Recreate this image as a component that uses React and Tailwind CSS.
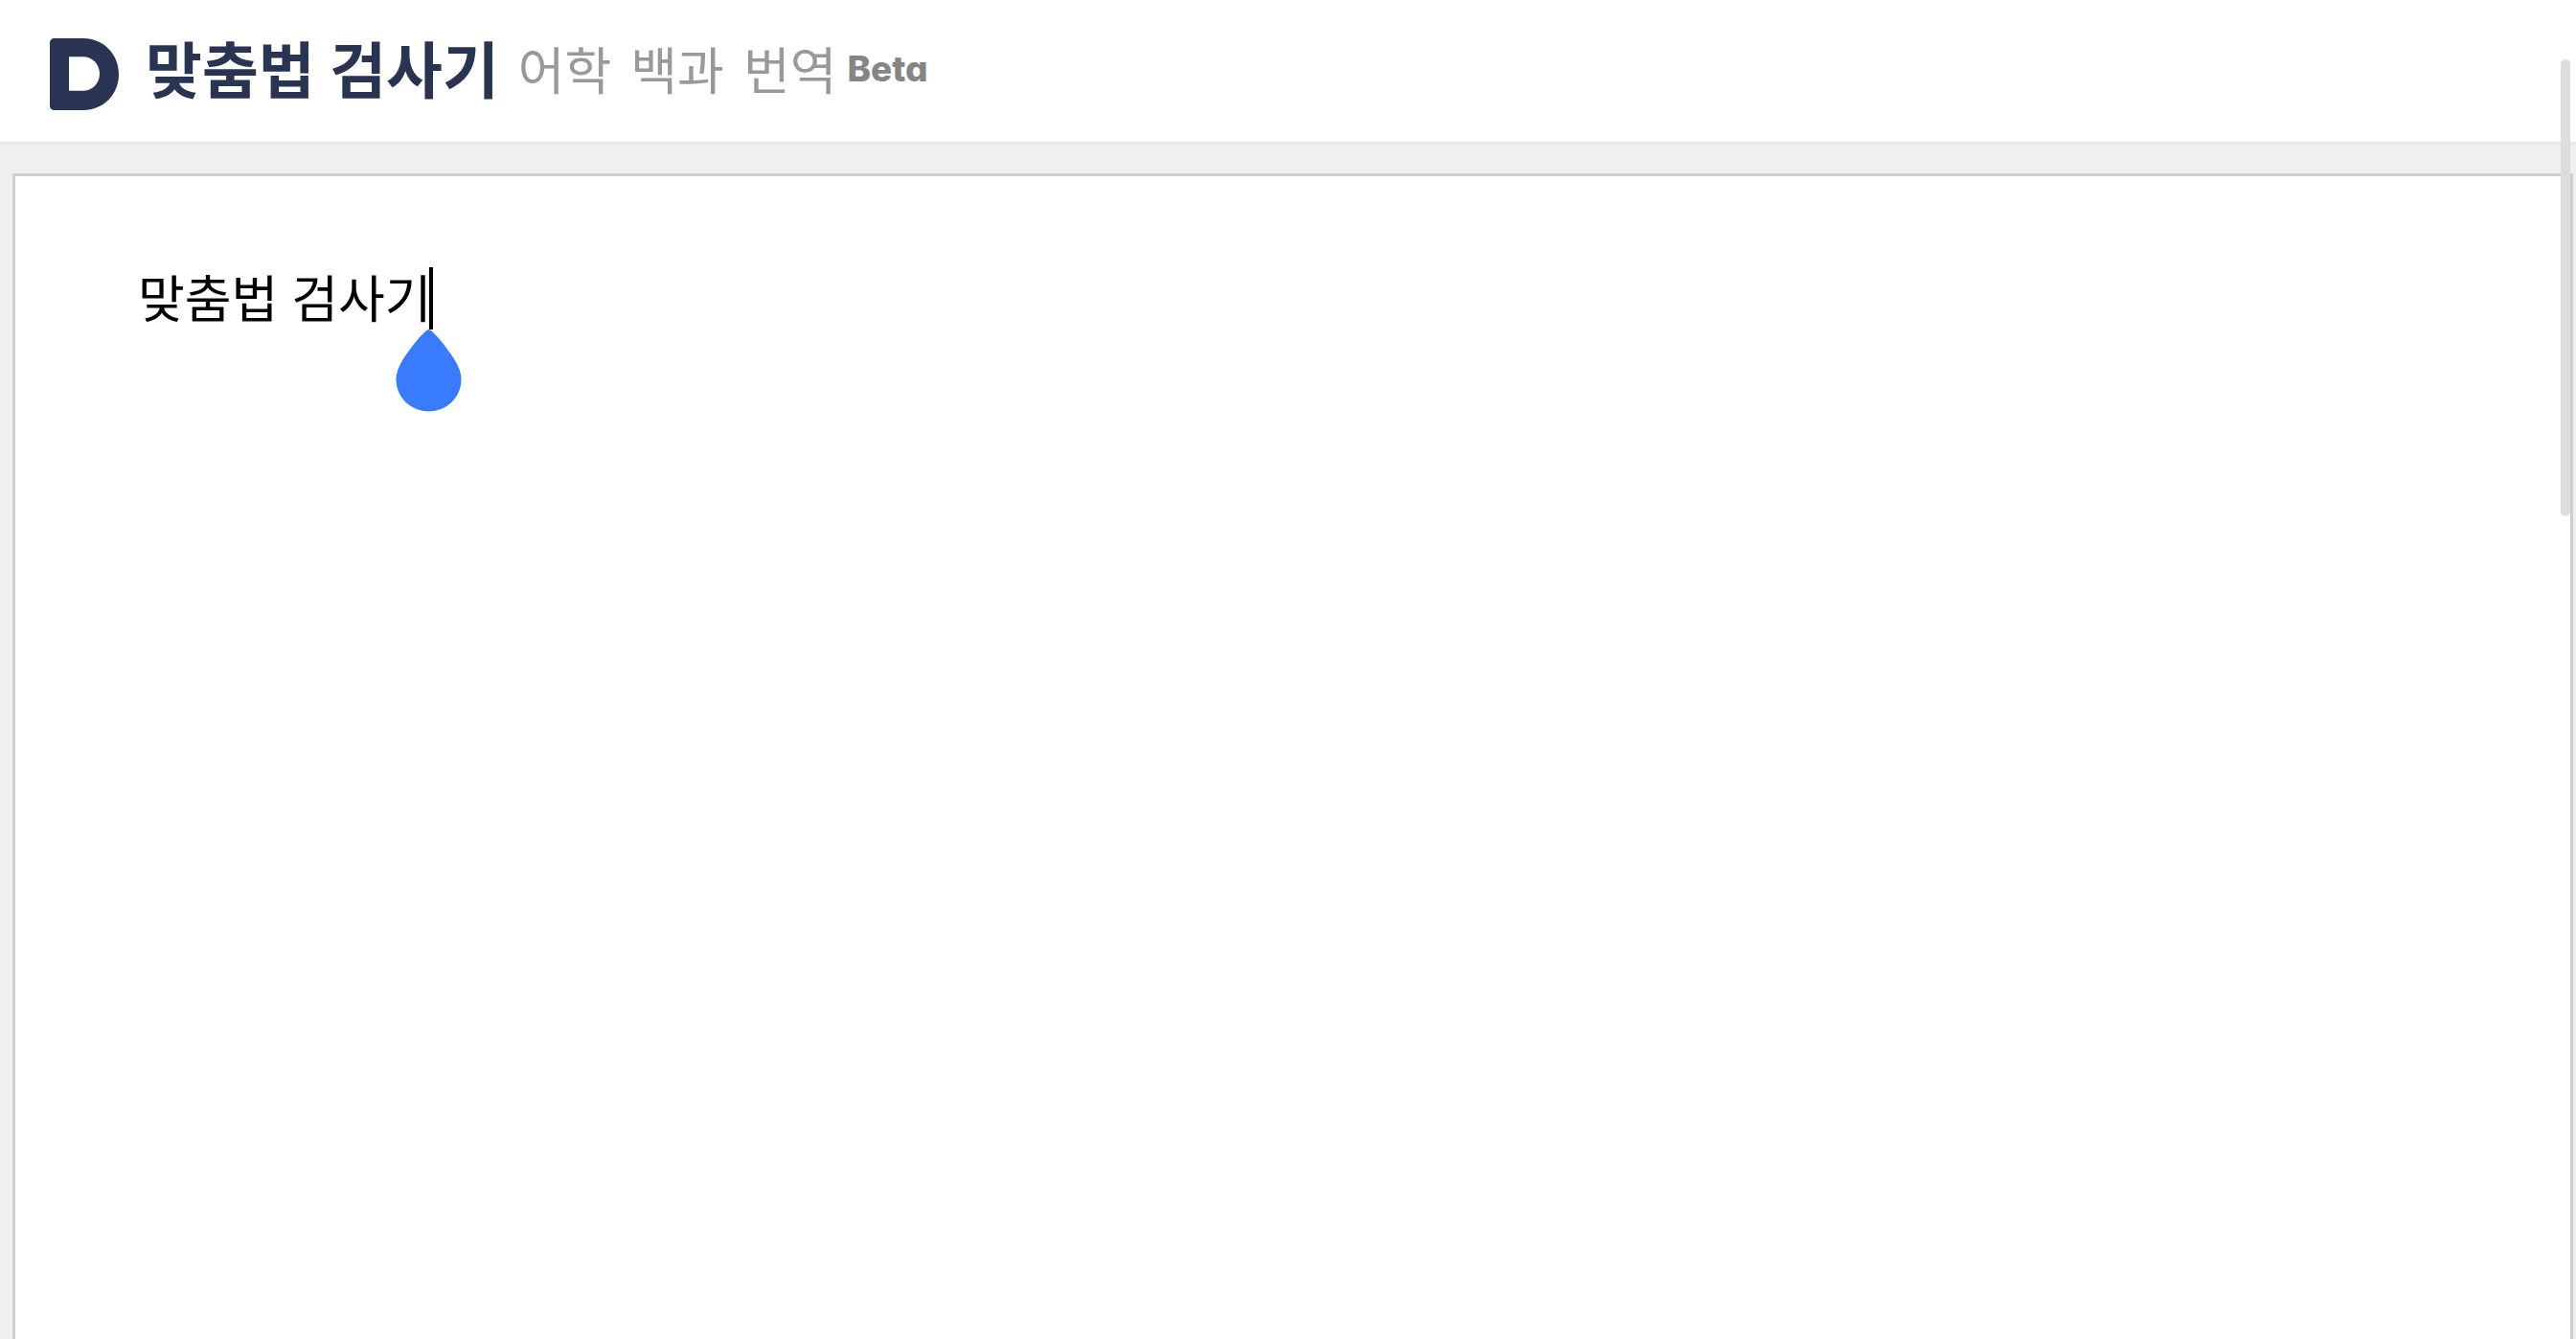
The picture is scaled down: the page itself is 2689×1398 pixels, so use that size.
const links = ["어학", "백과", "번역"];

function DaumLogo() {
  return (
    <svg width="72" height="75" viewBox="0 0 72 75" fill="none" className="shrink-0">
      <path
        fillRule="evenodd"
        clipRule="evenodd"
        d="M5 0H35C56 0 72 16.500 72 37.500S56 75 35 75H5C2 75 0 73 0 70V5C0 2 2 0 5 0ZM21 19.300C20.300 19.300 20 19.600 20 20.300V53.800C20 54.500 20.300 54.800 21 54.800H34.500C44.500 54.800 52 47 52 37S44.500 19.300 34.500 19.300H21Z"
        fill="#283451"
      />
    </svg>
  );
}

function CaretHandle() {
  return (
    <svg width="69" height="86" viewBox="0 0 69 86" className="absolute left-[-35px] top-[65px]">
      <path
        d="M34.500 0C37 0 45 9 50.500 16C60 28.500 68.500 40 68.500 52C68.500 71 53 85.500 34.500 85.500S0.500 71 0.500 52C0.500 40 9 28.500 18.500 16C24 9 32 0 34.500 0Z"
        fill="#387bff"
      />
    </svg>
  );
}

export default function App() {
  return (
    <div className="relative flex h-[1398px] w-full flex-col overflow-hidden bg-[#f0f0f0] font-['Noto_Sans_CJK_KR',sans-serif]">
      <header className="flex h-[151px] shrink-0 items-start border-b-[3px] border-[#e9e9e9] bg-white pl-[52px] pt-[40px]">
        <DaumLogo />
        <h1 className="ml-[28px] mt-[-8px] whitespace-nowrap text-[64px] font-bold leading-[75px] text-[#283451] [word-spacing:1px]">
          맞춤법 검사기
        </h1>
        <nav className="ml-[20px] mt-[-6px] flex gap-[20px] whitespace-nowrap text-[53px] leading-[75px] text-[#999]">
          {links.map((label) => (
            <a key={label}>{label}</a>
          ))}
        </nav>
        <span className="ml-[11px] font-[Inter] text-[37px] font-extrabold leading-[64px] text-[#858585] [font-feature-settings:'cv11']">
          Beta
        </span>
      </header>

      <main className="ml-[13px] mr-[3px] mt-[30px] flex flex-1 items-start border-x-[3px] border-t-[3px] border-[#cfcfcf] bg-white pl-[128px] pt-[95px]">
        <p className="mt-[-2px] whitespace-nowrap text-[53px] leading-[65px] text-black [word-spacing:2px]">맞춤법 검사기</p>
        <div className="relative ml-[-2px] h-[65px] w-[4px] bg-black">
          <CaretHandle />
        </div>
      </main>

      <div className="absolute left-[2673px] top-[62px] h-[477px] w-[10px] rounded-full bg-[#dddddf]" />
    </div>
  );
}
